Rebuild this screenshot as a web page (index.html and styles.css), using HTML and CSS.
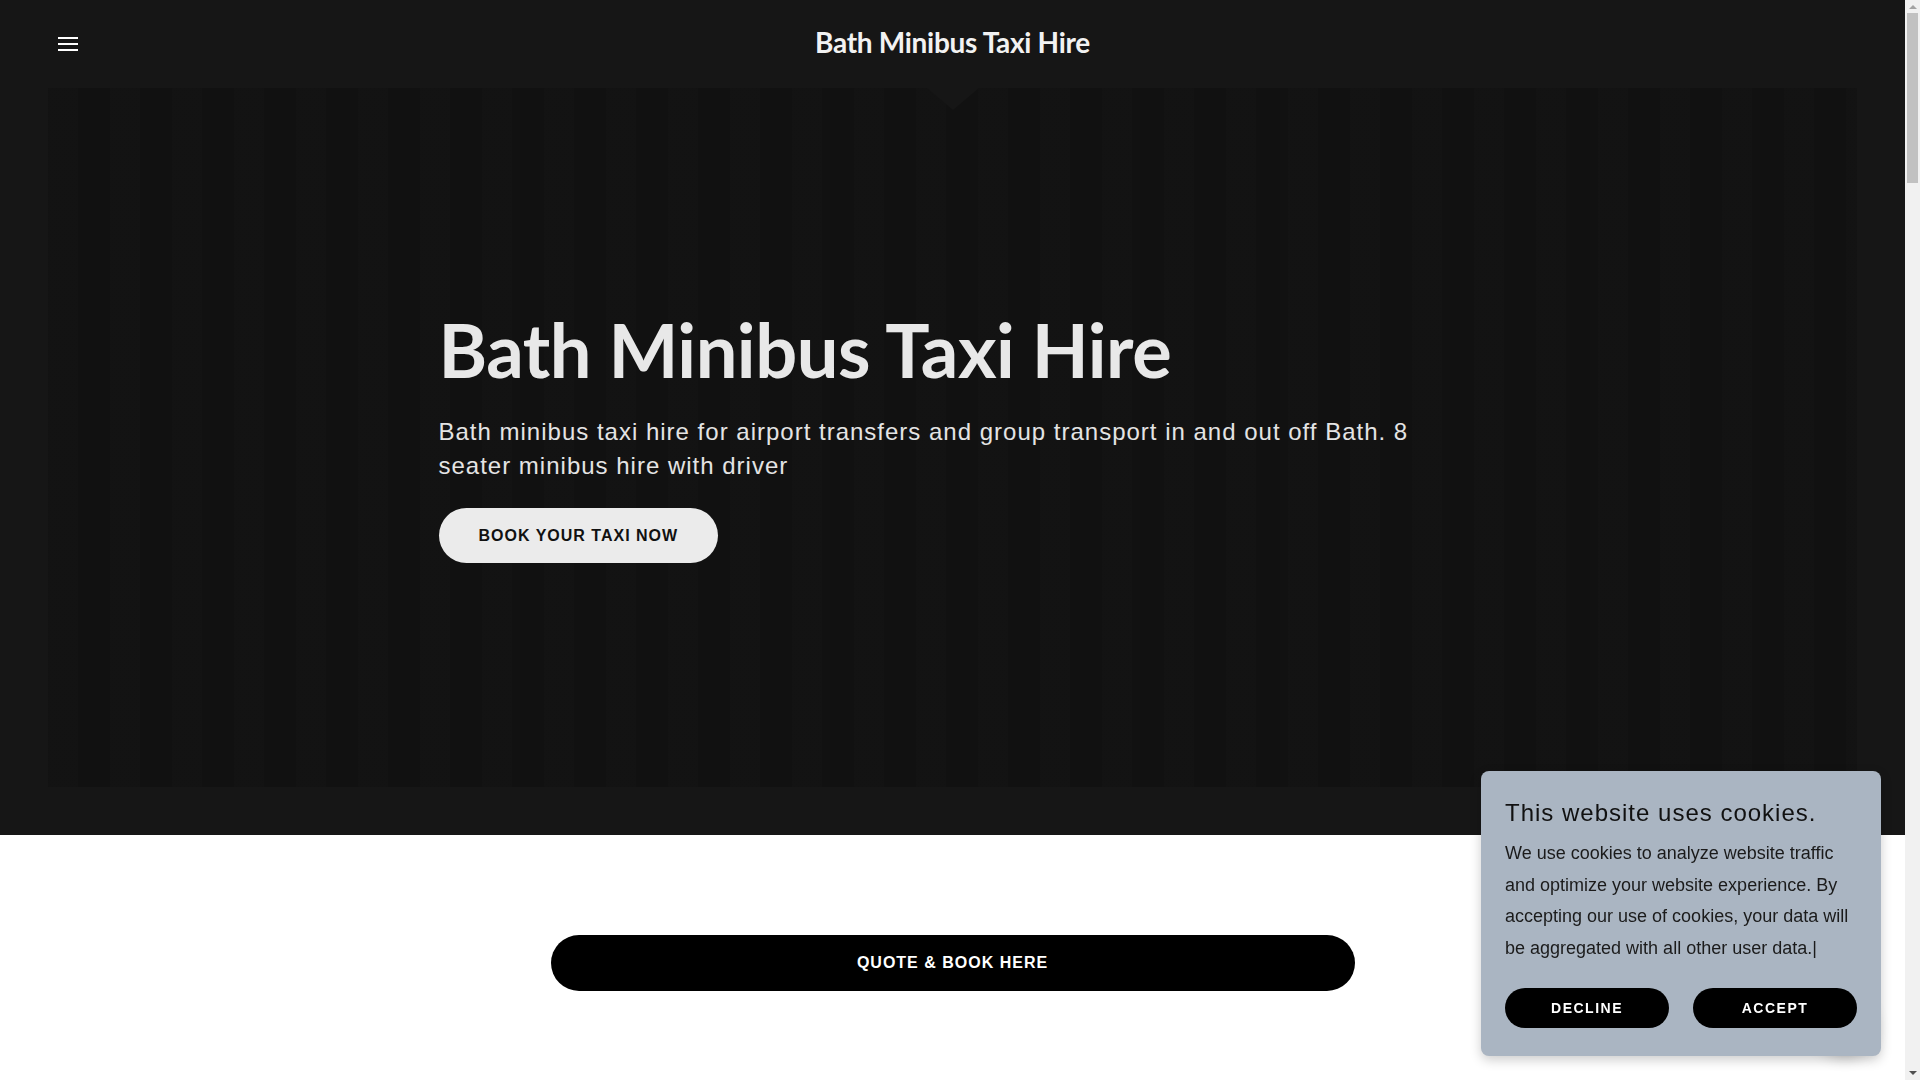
FILE: index.html
```html
<!DOCTYPE html>
<html lang="en">
	<head>
		<meta charset="UTF-8" />
		<meta name="viewport" content="width=device-width, initial-scale=1.0" />
		<title>Bath Minibus Taxi Hire</title>
		<link rel="stylesheet" href="styles.css">
	</head>
	<body>
		<div class="top">
			<header class="header">
				<button class="menu-btn" aria-label="Menu">
					<svg width="20" height="16" viewBox="0 0 20 16">
						<rect x="0" y="1" width="20" height="2" fill="#fff" />
						<rect x="0" y="7" width="20" height="2" fill="#fff" />
						<rect x="0" y="13" width="20" height="2" fill="#fff" />
					</svg>
				</button>
				<div class="site-title">Bath Minibus Taxi Hire</div>
				<span class="notch"></span>
			</header>

			<section class="hero">
				<div class="hero-inner">
					<h1>Bath Minibus Taxi Hire</h1>
					<p class="tagline">Bath minibus taxi hire for airport transfers and group transport in and out off Bath. 8 seater minibus hire with driver</p>
					<a class="btn-light" href="#">Book your taxi now</a>
				</div>
			</section>
		</div>

		<section class="quote">
			<a class="btn-dark" href="#">Quote &amp; Book Here</a>
		</section>

		<div class="page-rest"></div>

		<span class="float-btn"></span>
		<div class="cookie">
			<h2>This website uses cookies.</h2>
			<p>We use cookies to analyze website traffic and optimize your website experience. By accepting our use of cookies, your data will be aggregated with all other user data.|</p>
			<div class="cookie-actions">
				<button class="pill">Decline</button>
				<button class="pill">Accept</button>
			</div>
		</div>

		<div class="scrollbar">
			<span class="arrow up"></span>
			<span class="thumb"></span>
			<span class="arrow down"></span>
		</div>
	</body>
</html>
```

FILE: styles.css
```css
body {
	margin: 0 15px 0 0;
	font-family: "Liberation Sans", Arial, sans-serif;
	background: #fff;
}
.top {
	background: #161616;
	padding-bottom: 48px;
}
.header {
	position: relative;
	height: 88px;
	display: flex;
	align-items: center;
	justify-content: center;
}
.menu-btn {
	position: absolute;
	left: 58px;
	top: 36px;
	padding: 0;
	border: none;
	background: none;
	line-height: 0;
}
.site-title {
	font-family: Lato, sans-serif;
	font-weight: 700;
	font-size: 28px;
	letter-spacing: -0.3px;
	color: #f2f2f2;
	margin-top: -4px;
}
.notch {
	position: absolute;
	left: 50%;
	bottom: -22px;
	margin-left: -26px;
	width: 0;
	height: 0;
	border-left: 26px solid transparent;
	border-right: 26px solid transparent;
	border-top: 22px solid #161616;
	z-index: 2;
}
.hero {
	margin: 0 48px;
	min-height: 699px;
	display: flex;
	align-items: center;
	background-color: #111;
	background-image: repeating-linear-gradient(90deg, rgba(255,255,255,0.006) 0, rgba(255,255,255,0.006) 30px, rgba(0,0,0,0.02) 30px, rgba(0,0,0,0.02) 62px);
}
.hero-inner {
	width: 1028px;
	margin: 0 auto;
	padding-bottom: 10px;
}
.hero h1 {
	margin: 4px 0 0;
	font-family: Lato, sans-serif;
	font-weight: 700;
	font-size: 74px;
	line-height: 1.2;
	letter-spacing: -0.5px;
	color: #e8e8e8;
}
.tagline {
	margin: 20px 0 0;
	font-size: 24px;
	line-height: 34px;
	letter-spacing: 1px;
	color: #e4e4e4;
}
.btn-light {
	display: inline-block;
	margin-top: 25px;
	padding: 0 40px;
	height: 55px;
	line-height: 55px;
	border-radius: 28px;
	background: #ebebeb;
	color: #111;
	font-size: 16px;
	font-weight: 700;
	letter-spacing: 1px;
	text-transform: uppercase;
	text-decoration: none;
}
.quote {
	padding: 100px 0 0;
	display: flex;
	justify-content: center;
}
.btn-dark {
	display: block;
	width: 804px;
	height: 56px;
	line-height: 56px;
	border-radius: 28px;
	background: #000;
	color: #fff;
	text-align: center;
	font-size: 16px;
	font-weight: 700;
	letter-spacing: 1px;
	text-transform: uppercase;
	text-decoration: none;
}
.page-rest {
	height: 5500px;
}
.float-btn {
	position: fixed;
	right: 47px;
	bottom: 28px;
	width: 56px;
	height: 56px;
	border-radius: 50%;
	background: #fff;
	box-shadow: 0 4px 16px rgba(0,0,0,0.25);
}
.cookie {
	position: fixed;
	right: 39px;
	bottom: 24px;
	width: 400px;
	box-sizing: border-box;
	padding: 27px 24px 28px;
	background: #aab5c2;
	border-radius: 8px;
	box-shadow: 0 4px 12px rgba(0,0,0,0.2);
	color: #111;
}
.cookie h2 {
	margin: 0;
	font-size: 24px;
	font-weight: 400;
	letter-spacing: 1px;
	line-height: 29px;
}
.cookie p {
	margin: 11px 0 0;
	font-size: 18px;
	line-height: 31.5px;
	color: #1b1b1b;
}
.cookie-actions {
	display: flex;
	gap: 24px;
	margin-top: 24px;
}
.pill {
	flex: 1;
	height: 40px;
	border: none;
	border-radius: 20px;
	background: #000;
	color: #fff;
	font-family: "Liberation Sans", Arial, sans-serif;
	font-size: 14px;
	font-weight: 700;
	letter-spacing: 1.5px;
	text-transform: uppercase;
}

/* fake classic scrollbar */
.scrollbar {
	position: fixed;
	top: 0;
	right: 0;
	width: 15px;
	height: 100%;
	background: #f1f1f1;
	display: flex;
	flex-direction: column;
	align-items: center;
}
.arrow {
	width: 0;
	height: 0;
	border-left: 4px solid transparent;
	border-right: 4px solid transparent;
}
.arrow.up {
	margin: 5px 0 4px;
	border-bottom: 4px solid #a3a3a3;
}
.arrow.down {
	margin: auto 0 5px;
	border-top: 4px solid #505050;
}
.thumb {
	width: 11px;
	height: 170px;
	background: #c1c1c1;
}
```
